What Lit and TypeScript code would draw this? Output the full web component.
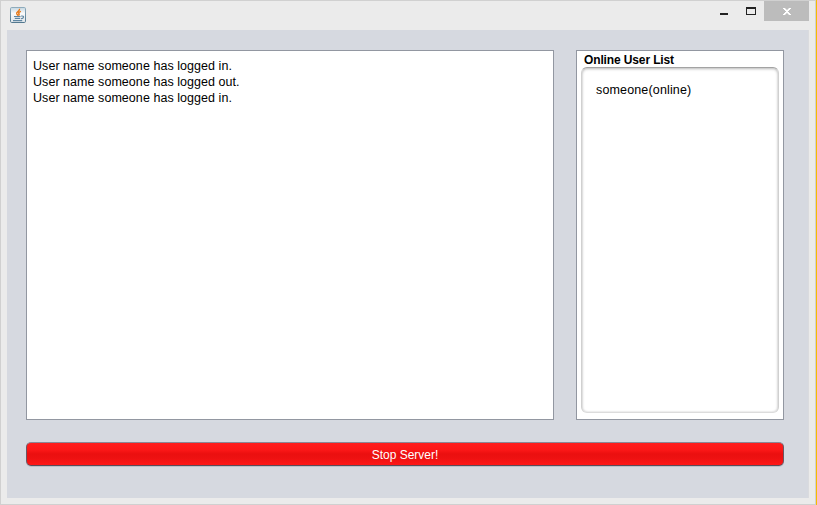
import { LitElement, html, css } from "lit";
import { customElement, state } from "lit/decorators.js";

@customElement("app-root")
export class AppRoot extends LitElement {
  @state() private log = [
    "User name someone has logged in.",
    "User name someone has logged out.",
    "User name someone has logged in.",
  ];
  @state() private users = ["someone(online)"];

  static styles = css`
    :host {
      display: flex;
      width: 817px;
      height: 505px;
      box-sizing: border-box;
      border-right: 1px solid #f5bc00;
      font: 12px/16px "Liberation Sans", Arial, sans-serif;
      color: #000;
      overflow: hidden;
    }
    * { box-sizing: border-box; }
    .window {
      flex: 1;
      display: flex;
      flex-direction: column;
      background: #ebebeb;
      border: 1px solid #d0d0d0;
      padding: 0 6px 6px;
    }
    .titlebar {
      height: 29px;
      flex: none;
      display: flex;
      align-items: flex-start;
    }
    .java { margin: 6px 0 0 3px; display: block; }
    .controls { margin-left: auto; display: block; }
    .client {
      flex: 1;
      background: #d6d9e0;
      border-right: 1px solid #dadbde;
      padding: 20px 24px 0 19px;
      display: flex;
      flex-direction: column;
      gap: 22px;
    }
    .panes { display: flex; gap: 22px; height: 370px; }
    .pane { background: #fff; border: 1px solid #9297a1; }
    .log { width: 528px; padding: 7px 6px; font-size: 12.5px; letter-spacing: 0.05px; }
    .side { width: 208px; padding: 1px 4px 6px; display: flex; flex-direction: column; }
    .heading { height: 15px; padding-left: 3px; font-weight: bold; line-height: 16px; letter-spacing: -0.13px; }
    .list {
      flex: 1;
      border: 1px solid #d0d0d0;
      border-top-color: #a3a3a3;
      border-bottom-color: #dcdcdc;
      border-radius: 6px;
      box-shadow: inset 0 1px 3px #bcbcbc, inset 0 0 2px #ddd;
      padding: 14px;
      font-size: 12.5px;
      letter-spacing: 0.15px;
    }
    .stop {
      height: 24px;
      width: 758px;
      padding: 1px 0 0;
      border: 1px solid #6b5661;
      border-top-color: #8b8795;
      border-bottom-color: #5c4b58;
      border-radius: 5px;
      box-shadow: 0 1px 0 #bcc0c9;
      background: linear-gradient(#ff1d1d, #fc1818 30%, #eb0f0f 50%, #ed1111 68%, #ff1717);
      color: #fff;
      font: inherit;
      text-align: center;
    }
  `;

  render() {
    return html`
      <div class="window">
        <div class="titlebar">
          <svg class="java" width="16" height="16" viewBox="0 0 16 16">
            <defs>
              <linearGradient id="face" x2="0" y2="1"><stop stop-color="#c4d7e2" /><stop offset=".4" stop-color="#fafafa" /><stop offset="1" stop-color="#dfe5e9" /></linearGradient>
              <linearGradient id="edge" x2="0" y2="1"><stop stop-color="#8eabbc" /><stop offset="1" stop-color="#53788f" /></linearGradient>
            </defs>
            <rect x=".5" y=".5" width="15" height="15" rx="1.2" fill="url(#face)" stroke="url(#edge)" />
            <path d="M9.5 1.8C10.2 4.3 5.9 4.8 6.7 6.6L8 8.7M10.9 4.3C8.6 5.2 8.2 6.2 9.2 7.1L8.6 8.8" fill="none" stroke="#e77817" stroke-width="1.4" />
            <path d="M4 9.5h6.5M4.8 11.4h5.4M3 13.6h9.2M11.2 9.1c3.6-.4 2.8 2.4-.2 2.7" fill="none" stroke="#5f86a2" stroke-width="1.1" />
          </svg>
          <svg class="controls" width="89" height="20" viewBox="0 0 89 20" shape-rendering="crispEdges">
            <path d="M0 12h8v2h-8z" fill="#222" />
            <path d="M26 6h10v8H26zM27 8v5h8V8z" fill="#222" fill-rule="evenodd" />
            <path d="M44 0h45v20H44z" fill="#bcbcbc" />
            <path d="M63 7h2v1h1v1h2V8h1V7h2v1h-1v1h-1v1h-1v1h1v1h1v1h1v1h-2v-1h-1v-1h-2v1h-1v1h-2v-1h1v-1h1v-1h1v-1h-1V9h-1V8h-1z" fill="#fff" />
            <path d="M63 7h3v1h-3zM68 7h3v1h-3zM63 13h3v1h-3zM68 13h3v1h-3zM64 8h3v1h-3zM67 8h3v1h-3zM64 12h3v1h-3zM67 12h3v1h-3z" fill="#fff" fill-opacity=".4" />
          </svg>
        </div>
        <main class="client">
          <div class="panes">
            <section class="pane log">${this.log.map((t) => html`<div>${t}</div>`)}</section>
            <section class="pane side">
              <div class="heading">Online User List</div>
              <div class="list">${this.users.map((u) => html`<div>${u}</div>`)}</div>
            </section>
          </div>
          <button class="stop">Stop Server!</button>
        </main>
      </div>
    `;
  }
}
